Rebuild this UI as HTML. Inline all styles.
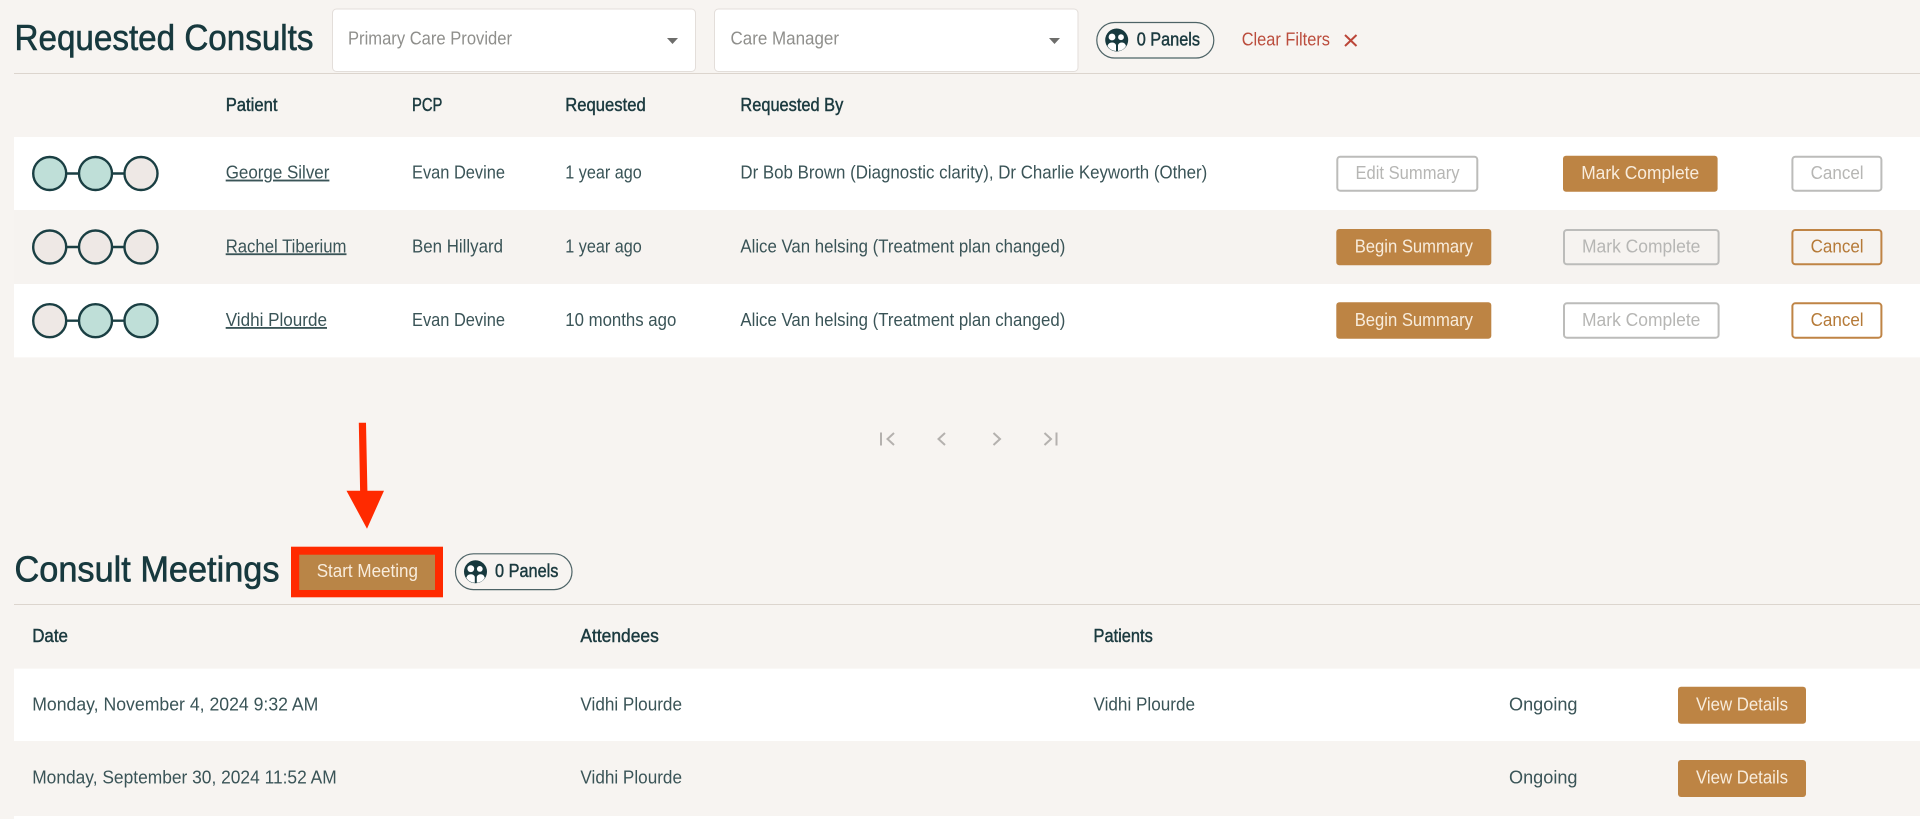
<!DOCTYPE html>
<html lang="en">
<head>
<meta charset="utf-8">
<title>Requested Consults</title>
<style>
html,body{margin:0;padding:0;width:1920px;height:819px;overflow:hidden;background:#f7f4f1}
svg{display:block}
text{font-family:"Liberation Sans",sans-serif;font-size:18.5px;fill:#3a5457;transform:translateY(-.7px)}
.h{font-size:36px;fill:#17393e;stroke:#17393e;stroke-width:.6px;transform:none}
.th{font-size:18.5px;fill:#1b3a3f;stroke:#1b3a3f;stroke-width:.45px}
.ph{fill:#8f8f8c}
.w{fill:#f8ecdc}
.d{fill:#b6b6b4}
.o{fill:#b57a38}
.chip{fill:none;stroke:#4d6366;stroke-width:1.2}
.dis{fill:none;stroke:#bcbcba;stroke-width:2}
.or{fill:none;stroke:#bf8445;stroke-width:2}
.g{fill:#bfdfd8;stroke:#1a3f43;stroke-width:2.4}
.e{fill:#eee8e5;stroke:#1a3f43;stroke-width:2.4}
.pg{fill:none;stroke:#b4b1ae;stroke-width:2}
</style>
</head>
<body>
<svg width="1920" height="819" viewBox="0 0 1920 819" xmlns="http://www.w3.org/2000/svg">
<rect width="1920" height="819" fill="#f7f4f1"/>

<!-- top header -->
<text class="h" x="14.500" y="50" textLength="299" lengthAdjust="spacingAndGlyphs">Requested Consults</text>
<rect x="332.500" y="9" width="363" height="62.500" rx="4" fill="#fff" stroke="#e3deda"/>
<text class="ph" x="348" y="45" textLength="164" lengthAdjust="spacingAndGlyphs">Primary Care Provider</text>
<path d="M667 38h11l-5.500 6z" fill="#6d6d6b"/>
<rect x="714.500" y="9" width="363.500" height="62.500" rx="4" fill="#fff" stroke="#e3deda"/>
<text class="ph" x="730.500" y="45" textLength="108.500" lengthAdjust="spacingAndGlyphs">Care Manager</text>
<path d="M1049 38h11l-5.500 6z" fill="#6d6d6b"/>
<rect class="chip" x="1096.800" y="22.500" width="117" height="35.500" rx="17.750"/>
<circle cx="1116.700" cy="40" r="11.500" fill="#17393e"/>
<circle cx="1112" cy="37" r="3.400" fill="#fff"/><circle cx="1121" cy="37.200" r="2.900" fill="#fff"/>
<path d="M1107.500 46Q1108.500 42.500 1112 42.500Q1115 42.500 1116 45L1116 51Q1110 50.500 1107.500 46ZM1126 46Q1125 42.500 1122 42.500Q1119 42.500 1118 45L1118 51Q1123.500 50.500 1126 46Z" fill="#fff"/>
<text class="th" x="1136.700" y="46" textLength="63.300" lengthAdjust="spacingAndGlyphs">0 Panels</text>
<text x="1241.700" y="46" textLength="88.300" lengthAdjust="spacingAndGlyphs" style="fill:#bb4d3d">Clear Filters</text>
<path d="M1345 35l11.500 11M1356.500 35l-11.500 11" fill="none" stroke="#bb4638" stroke-width="2"/>
<rect x="14" y="73" width="1906" height="1" fill="#dcd5ce"/>

<!-- table 1 header -->
<text class="th" x="225.700" y="111.700" textLength="51.800" lengthAdjust="spacingAndGlyphs">Patient</text>
<text class="th" x="412" y="111.700" textLength="30.400" lengthAdjust="spacingAndGlyphs">PCP</text>
<text class="th" x="565.300" y="111.700" textLength="80.400" lengthAdjust="spacingAndGlyphs">Requested</text>
<text class="th" x="740.400" y="111.700" textLength="102.900" lengthAdjust="spacingAndGlyphs">Requested By</text>

<!-- rows -->
<rect x="14" y="137" width="1906" height="73" fill="#fff"/>
<rect x="14" y="210" width="1906" height="74" fill="#f6f3f0"/>
<rect x="14" y="284" width="1906" height="73.300" fill="#fff"/>

<!-- row 1 -->
<path d="M66 173.500h14M112 173.500h14" stroke="#1a3f43" stroke-width="2.400"/>
<circle class="g" cx="49.700" cy="173.500" r="16.500"/><circle class="g" cx="95.500" cy="173.500" r="16.500"/><circle class="e" cx="141" cy="173.500" r="16.500"/>
<text x="225.700" y="179.300" textLength="103.700" lengthAdjust="spacingAndGlyphs" text-decoration="underline">George Silver</text>
<text x="412" y="179.300" textLength="93" lengthAdjust="spacingAndGlyphs">Evan Devine</text>
<text x="565.300" y="179.300" textLength="76.500" lengthAdjust="spacingAndGlyphs">1 year ago</text>
<text x="740.400" y="179.300" textLength="466.900" lengthAdjust="spacingAndGlyphs">Dr Bob Brown (Diagnostic clarity), Dr Charlie Keyworth (Other)</text>
<rect class="dis" x="1337.300" y="156.700" width="140" height="34" rx="3"/>
<text class="d" x="1355.500" y="179.500" textLength="104" lengthAdjust="spacingAndGlyphs">Edit Summary</text>
<rect x="1563" y="155.700" width="154.600" height="36" rx="3" fill="#bd8444"/>
<text class="w" x="1581.200" y="179.500" textLength="118" lengthAdjust="spacingAndGlyphs">Mark Complete</text>
<rect class="dis" x="1792.400" y="156.700" width="89" height="34" rx="3"/>
<text class="d" x="1810.600" y="179.500" textLength="53" lengthAdjust="spacingAndGlyphs">Cancel</text>

<!-- row 2 -->
<path d="M66 247h14M112 247h14" stroke="#1a3f43" stroke-width="2.400"/>
<circle class="e" cx="49.700" cy="247" r="16.500"/><circle class="e" cx="95.500" cy="247" r="16.500"/><circle class="e" cx="141" cy="247" r="16.500"/>
<text x="225.700" y="253" textLength="120.800" lengthAdjust="spacingAndGlyphs" text-decoration="underline">Rachel Tiberium</text>
<text x="412" y="253" textLength="91" lengthAdjust="spacingAndGlyphs">Ben Hillyard</text>
<text x="565.300" y="253" textLength="76.500" lengthAdjust="spacingAndGlyphs">1 year ago</text>
<text x="740.400" y="253" textLength="324.900" lengthAdjust="spacingAndGlyphs">Alice Van helsing (Treatment plan changed)</text>
<rect x="1336.300" y="229" width="155" height="36.300" rx="3" fill="#bd8444"/>
<text class="w" x="1354.700" y="253" textLength="118.300" lengthAdjust="spacingAndGlyphs">Begin Summary</text>
<rect class="dis" x="1564" y="230" width="154.600" height="34.300" rx="3"/>
<text class="d" x="1582" y="253" textLength="118.400" lengthAdjust="spacingAndGlyphs">Mark Complete</text>
<rect class="or" x="1792.400" y="230" width="89" height="34.300" rx="3"/>
<text class="o" x="1810.600" y="253" textLength="53" lengthAdjust="spacingAndGlyphs">Cancel</text>

<!-- row 3 -->
<path d="M66 320.700h14M112 320.700h14" stroke="#1a3f43" stroke-width="2.400"/>
<circle class="e" cx="49.700" cy="320.700" r="16.500"/><circle class="g" cx="95.500" cy="320.700" r="16.500"/><circle class="g" cx="141" cy="320.700" r="16.500"/>
<text x="225.700" y="326.700" textLength="101.300" lengthAdjust="spacingAndGlyphs" text-decoration="underline">Vidhi Plourde</text>
<text x="412" y="326.700" textLength="93" lengthAdjust="spacingAndGlyphs">Evan Devine</text>
<text x="565.300" y="326.700" textLength="111" lengthAdjust="spacingAndGlyphs">10 months ago</text>
<text x="740.400" y="326.700" textLength="324.900" lengthAdjust="spacingAndGlyphs">Alice Van helsing (Treatment plan changed)</text>
<rect x="1336.300" y="302.300" width="155" height="36.400" rx="3" fill="#bd8444"/>
<text class="w" x="1354.700" y="326.700" textLength="118.300" lengthAdjust="spacingAndGlyphs">Begin Summary</text>
<rect class="dis" x="1564" y="303.300" width="154.600" height="34.400" rx="3"/>
<text class="d" x="1582" y="326.700" textLength="118.400" lengthAdjust="spacingAndGlyphs">Mark Complete</text>
<rect class="or" x="1792.400" y="303.300" width="89" height="34.400" rx="3"/>
<text class="o" x="1810.600" y="326.700" textLength="53" lengthAdjust="spacingAndGlyphs">Cancel</text>

<!-- pagination -->
<path class="pg" d="M881 432.500v13M894 433l-6.500 6 6.500 6M945 433l-6.500 6 6.500 6M993.500 433l6.500 6-6.500 6M1044.500 433l6.500 6-6.500 6M1056.500 432.500v13"/>

<!-- red annotation arrow -->
<path d="M358.800 422.700h7.200l1.400 68H384L367 528.700 346.500 490.700h13.600z" fill="#ff2a00"/>

<!-- consult meetings -->
<text class="h" x="14.500" y="581.700" textLength="265" lengthAdjust="spacingAndGlyphs">Consult Meetings</text>
<rect x="291" y="546.700" width="152" height="50.600" fill="#ff2a00"/>
<rect x="299.200" y="554.700" width="135.800" height="35.300" fill="#b98547"/>
<text class="w" x="316.700" y="577.700" textLength="101.300" lengthAdjust="spacingAndGlyphs">Start Meeting</text>
<rect class="chip" x="455.500" y="553.800" width="116.500" height="35.800" rx="17.900"/>
<circle cx="475.500" cy="571.700" r="11.500" fill="#17393e"/>
<circle cx="470.800" cy="568.700" r="3.400" fill="#fff"/><circle cx="479.800" cy="568.900" r="2.900" fill="#fff"/>
<path d="M466.300 577.700Q467.300 574.200 470.800 574.200Q473.800 574.200 474.800 576.700L474.800 582.700Q468.800 582.200 466.300 577.700ZM484.800 577.700Q483.800 574.200 480.800 574.200Q477.800 574.200 476.800 576.700L476.800 582.700Q482.300 582.200 484.800 577.700Z" fill="#fff"/>
<text class="th" x="495" y="577.500" textLength="63.400" lengthAdjust="spacingAndGlyphs">0 Panels</text>
<rect x="14" y="604" width="1906" height="1" fill="#dcd5ce"/>

<text class="th" x="32.200" y="642.500" textLength="35.800" lengthAdjust="spacingAndGlyphs">Date</text>
<text class="th" x="580.400" y="642.500" textLength="78.400" lengthAdjust="spacingAndGlyphs">Attendees</text>
<text class="th" x="1093.500" y="642.500" textLength="59.300" lengthAdjust="spacingAndGlyphs">Patients</text>

<rect x="14" y="668.700" width="1906" height="72.300" fill="#fff"/>
<rect x="14" y="816" width="1906" height="3" fill="#fff"/>

<text x="32.200" y="711" textLength="286.200" lengthAdjust="spacingAndGlyphs">Monday, November 4, 2024 9:32 AM</text>
<text x="580.400" y="711" textLength="101.600" lengthAdjust="spacingAndGlyphs">Vidhi Plourde</text>
<text x="1093.500" y="711" textLength="101.500" lengthAdjust="spacingAndGlyphs">Vidhi Plourde</text>
<text x="1509" y="711" textLength="68.500" lengthAdjust="spacingAndGlyphs">Ongoing</text>
<rect x="1678" y="686.700" width="128" height="37" rx="3" fill="#bd8444"/>
<text class="w" x="1696" y="711" textLength="92" lengthAdjust="spacingAndGlyphs">View Details</text>

<text x="32.200" y="784.300" textLength="304.500" lengthAdjust="spacingAndGlyphs">Monday, September 30, 2024 11:52 AM</text>
<text x="580.400" y="784.300" textLength="101.600" lengthAdjust="spacingAndGlyphs">Vidhi Plourde</text>
<text x="1509" y="784.300" textLength="68.500" lengthAdjust="spacingAndGlyphs">Ongoing</text>
<rect x="1678" y="760" width="128" height="37" rx="3" fill="#bd8444"/>
<text class="w" x="1696" y="784.300" textLength="92" lengthAdjust="spacingAndGlyphs">View Details</text>
</svg>
</body>
</html>
